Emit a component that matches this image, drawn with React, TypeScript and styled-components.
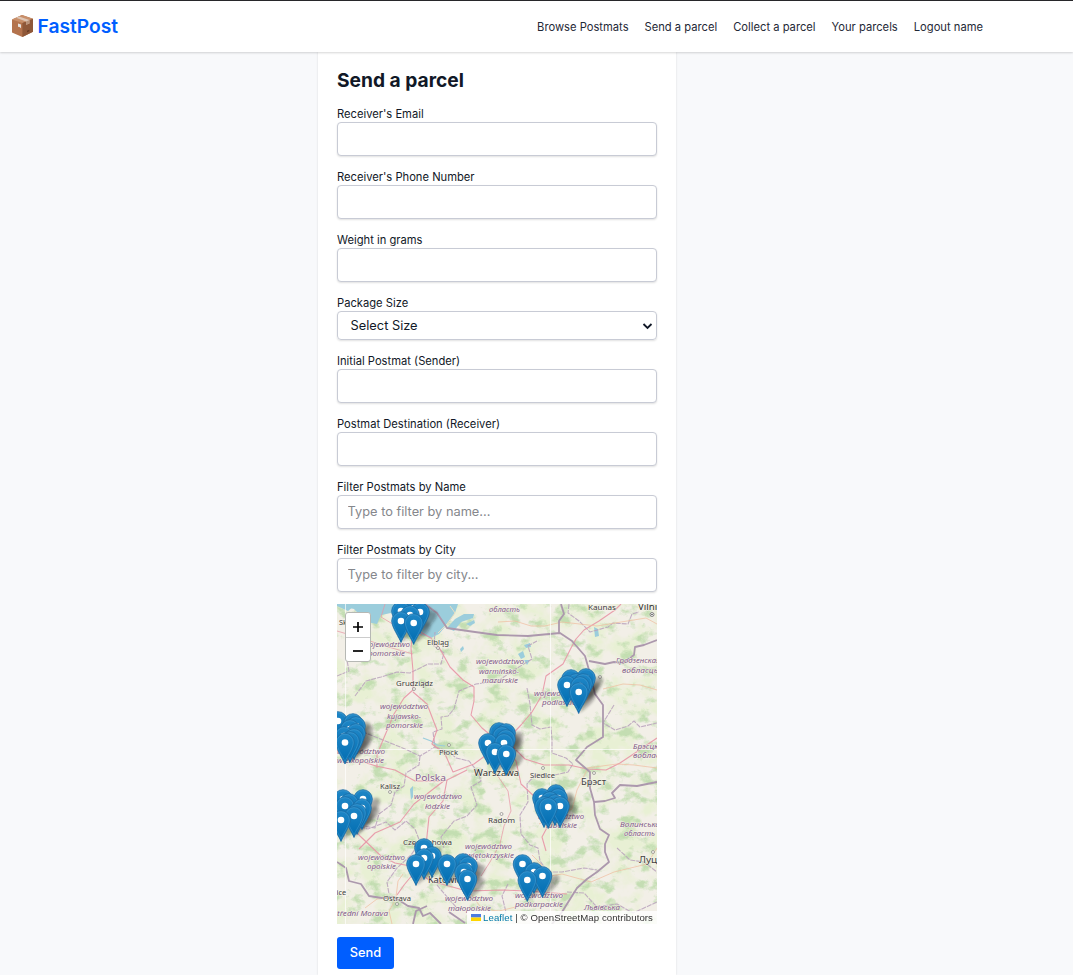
import React from "react";
import styled, { createGlobalStyle } from "styled-components";

const GlobalStyle = createGlobalStyle`
  * { box-sizing: border-box; }
  html, body { margin: 0; height: 100%; overflow: hidden; }
  body {
    background: #f8f9fb;
    color: #111827;
    font-family: Inter, "Liberation Sans", sans-serif;
  }
`;

const Page = styled.div`
  height: 100vh;
  display: flex;
  flex-direction: column;
  overflow: hidden;
`;

const Header = styled.header`
  position: relative;
  flex: 0 0 52px;
  display: flex;
  align-items: center;
  justify-content: space-between;
  padding: 0 90px 0 12px;
  background: #fff;
  border-top: 1px solid #27272a;
  box-shadow: 0 1px 2px rgba(0, 0, 0, 0.16);
`;

const Brand = styled.a`
  display: flex;
  align-items: center;
  gap: 4.5px;
  padding-bottom: 2px;
  color: #005eff;
  font-size: 19.2px;
  font-weight: 600;
  line-height: 28px;
`;

const Nav = styled.nav`
  display: flex;
  gap: 16px;
  padding-top: 1px;
`;

const NavLink = styled.a`
  color: #1f2937;
  font-size: 11.2px;
  line-height: 16px;
  white-space: nowrap;
`;

const Panel = styled.main`
  width: 358px;
  height: 923px;
  flex: none;
  margin-left: 318px;
  padding: 14px 19px 0;
  background: #fff;
  box-shadow: 0 0 2px rgba(0, 0, 0, 0.13);
`;

const Title = styled.h1`
  margin: 0 0 13px;
  font-size: 19.2px;
  font-weight: 700;
  line-height: 28px;
`;

const Field = styled.div<{ $last?: boolean }>`
  display: flex;
  flex-direction: column;
  margin-bottom: ${(p) => (p.$last ? 12 : 14)}px;
`;

const Label = styled.label`
  font-size: 11.2px;
  line-height: 15px;
`;

const Input = styled.input`
  height: 34px;
  padding: 0 10px 2px 9.6px;
  border: 1px solid #c8cbd5;
  border-radius: 4px;
  background: #fff;
  box-shadow: 0 1px 2px rgba(0, 0, 0, 0.12);
  font: 400 12.8px Inter, sans-serif;
  outline: none;
  &::placeholder { color: #85878c; opacity: 1; }
`;

const SelectBox = styled.div`
  display: flex;
  align-items: center;
  justify-content: space-between;
  height: 29px;
  padding: 0 3px 0 12.6px;
  border: 1px solid #c8cbd5;
  border-radius: 4px;
  box-shadow: 0 1px 2px rgba(0, 0, 0, 0.12);
  font-size: 12.8px;
`;

const MapFrame = styled.div`
  position: relative;
  width: 320px;
  height: 320px;
  margin-bottom: 13px;
  overflow: hidden;
  & > svg { display: block; }
`;

const ZoomControl = styled.div`
  position: absolute;
  left: 8px;
  top: 8px;
  width: 26px;
  border: 1px solid #b6b8b4;
  border-radius: 3px;
  background: #fff;
`;

const ZoomButton = styled.button`
  display: flex;
  align-items: center;
  justify-content: center;
  width: 24px;
  height: 24px;
  padding: 4px 0 0;
  border: 0;
  background: transparent;
  & + & { border-top: 1px solid #ccc; padding-top: 3px; }
`;

const Attribution = styled.div`
  position: absolute;
  right: 0;
  bottom: 0;
  display: flex;
  align-items: center;
  gap: 2.5px;
  height: 13px;
  padding: 0 4px;
  background: rgba(255, 255, 255, 0.82);
  color: #333;
  font: 9.6px/13px "Liberation Sans", sans-serif;
  letter-spacing: 0.08px;
  white-space: pre;
  & a { color: #0078a8; }
`;

const SendButton = styled.button`
  width: 57px;
  height: 32px;
  padding: 0 0 2px;
  border: 0;
  border-radius: 3px;
  background: #005eff;
  color: #fff;
  font: 500 12.8px Inter, sans-serif;
`;

const Parcel = () => (
  <svg width="21" height="22" viewBox="0 0 21 22">
    <path d="M0 4.6 10 0l11 3.7v13L10.4 22 0 17.4Z" fill="#b4734d" />
    <path d="M0 4.6 10 0l11 3.7L10.4 8Z" fill="#c88f6a" />
    <path d="M10.4 8 21 3.7v13L10.4 22Z" fill="#8f5839" />
    <path d="M4 2.7 7 1.4 17.4 5.1v3.3l-3.3 1.3V6.5Z" fill="#ddc5b5" />
    <path d="m14.1 6.5 3.3-1.4v3.3l-3.3 1.4Z" fill="#b99279" />
    <path d="m6 8.4 3 1.1v3.7L7.5 12 6 11.8Z" fill="#e6e3df" />
    <path d="m15 15.8 2.3-1v1.5l-2.3 1Z" fill="#643923" />
  </svg>
);

const borders = [
  "M88 0 100 9 110 24 138 28 160 31 191 32 223 29 235 37 248 52 252 66 258 90 266 101 266 133 250 143 239 156 253 168 253 184 257 198 258 211 263 225 272 231 268 240 268 248 272 258 260 268 250 275 240 284 225 308 215 320",
  "M222 29 222 17 227 10 224 0",
  "M252 57 268 60 277 58 286 59 297 51 298 43 307 41 320 36",
  "M257 198 268 197 278 194 275 189 283 181 300 182 320 178",
  "M0 258 9 264 12 277 24 280 32 292 45 294 57 293 71 302 82 304 86 312 93 309 104 320",
  "M112 308 128 319M76 320 79 307 90 302",
];

const regions = [
  "M0 72 12 67 9 51 19 46 17 34M18 92 29 77 44 73 60 68 73 69 91 60 104 60 107 49 97 42 98 28",
  "M2 133 18 139 26 128 46 136 68 145 83 152 98 143 96 128 105 125 104 113 111 112 117 105 122 87 139 80 161 77 177 66 195 55 191 42 200 37",
  "M83 152 82 161 69 169 67 182 58 188 54 201 42 210 38 224 26 222",
  "M98 143 111 147 119 154 132 157 141 168 144 177 134 183 140 201 130 212 117 217 104 233 107 244",
  "M0 226 16 221 31 225 49 218 58 226 69 217 78 225 83 238 74 251 60 264 50 278 52 290",
  "M101 258 104 269 100 281 111 294 119 303M171 280 165 292 169 308 160 320",
  "M190 84 193 100 195 121 203 125 214 123 215 136 215 149 229 154 236 160 231 168 213 172 199 170 190 180 191 198 183 211 184 230 193 241 201 244 203 257 211 268 225 268 247 264 260 266",
  "M232 0 231 9 242 17 253 28 271 23 276 19 291 20 295 10 302 8M277 101 266 119 278 126 291 122 297 117 303 123 320 119M280 244 293 256 307 258 320 268M230 288 247 289 260 303 280 300 296 309 320 298",
];

const roads = [
  "M76 24 74 44 76 67 76 86 67 94 57 110 46 136 40 151 40 164",
  "M76 88 90 100 100 126 95 140 108 150 116 168 137 160 152 149 165 140",
  "M14 154 39 162 58 166 78 177 101 177 110 176 130 166",
  "M110 176 106 197 92 213 90 232 88 251 77 269 67 281 60 291",
  "M108 176 95 186 77 200 63 218 38 229 22 245",
  "M76 24 94 34 103 45 113 63 126 76 137 83 137 97 134 111 145 124 163 139",
  "M2 203 9 216 23 232 44 252 58 259 73 262 92 276 108 281 130 287 166 286 190 287 230 290",
  "M166 140 184 121 195 108 205 91 209 72 226 60 234 44 239 35 247 26 262 17 278 6 284 0",
  "M171 138 188 155 207 161 232 161 250 165 269 166 283 159 301 147 320 134",
  "M166 144 179 157 184 180 199 194 211 205 213 218 205 233 209 247",
  "M161 18 178 17 194 22 208 22 225 18 260 22 284 18 309 14 320 20",
  "M250 166 240 186 235 205 217 212 202 220",
  "M250 164 280 160 297 161 320 164M266 85 286 80 303 81 320 86",
  "M195 251 204 260 208 273 225 270 254 278 277 268 310 260 320 244",
  "M28 304 40 295 59 293 61 277 66 270M55 320 52 307 60 293",
  "M134 290 145 305 162 307 187 301",
  "M48 0 44 13 59 22 73 29 85 31M0 27 27 35 48 42 76 50",
  "M159 142 156 154 158 168 171 187 174 207 167 222 163 240 153 258 144 272",
];

const waters =
  "M110 24 118 15 127 10 137 10 136 14 124 18 117 27M187 41l6-2 1 4-5 1ZM181 50l5-3 2 6-4 2ZM187 56l6 0-3 5ZM257 23l4 2 1 7-4 1ZM73 185l3-3 0 11-2 3ZM129 20l8-4 1 3-5 3ZM123 45l3-3 1 3-3 3Z";

type LabelData = [string, number, number, number, ("region" | "city" | "big" | "country" | "town")?];

const mapLabels: LabelData[] = [
  ["województwo", 26, 43, 47, "region"],
  ["pomorskie", 31, 52, 37, "region"],
  ["область", 152, 8, 31, "region"],
  ["województwo", 139, 60, 48, "region"],
  ["warmińsko-", 142, 70, 40, "region"],
  ["mazurskie", 145, 79, 36, "region"],
  ["województwo", 43, 105, 48, "region"],
  ["kujawsko-", 50, 115, 34, "region"],
  ["pomorskie", 49, 124, 37, "region"],
  ["województwo", 0, 150, 48, "region"],
  ["wielkopolskie", 0, 159, 47, "region"],
  ["województwo", 77, 195, 48, "region"],
  ["łódzkie", 88, 205, 25, "region"],
  ["województwo", 197, 92, 48, "region"],
  ["podlaskie", 205, 101, 34, "region"],
  ["Гродзенская", 279, 59, 44, "region"],
  ["вобласць", 285, 69, 36, "region"],
  ["Брэсцкая", 296, 145, 34, "region"],
  ["вобласць", 296, 154, 36, "region"],
  ["województwo", 201, 215, 46, "region"],
  ["lubelskie", 209, 224, 31, "region"],
  ["Волинська", 283, 223, 40, "region"],
  ["область", 287, 232, 31, "region"],
  ["województwo", 21, 256, 47, "region"],
  ["opolskie", 30, 265, 29, "region"],
  ["województwo", 128, 245, 47, "region"],
  ["świętokrzyskie", 126, 254, 51, "region"],
  ["województwo", 108, 297, 48, "region"],
  ["małopolskie", 111, 307, 43, "region"],
  ["województwo", 178, 294, 48, "region"],
  ["podkarpackie", 178, 303, 48, "region"],
  ["Львівська", 247, 306, 36, "region"],
  ["Střední Morava", -4, 312, 55, "region"],
  ["Elbląg", 90, 41, 22, "town"],
  ["Grudziądz", 59, 82, 37, "town"],
  ["Sk", 2, 21, 8, "town"],
  ["Kaunas", 251, 6, 28, "town"],
  ["Vilnius", 301, 6, 30, "city"],
  ["Płock", 102, 151, 19, "town"],
  ["Warszawa", 137, 172, 45, "city"],
  ["Kalisz", 43, 185, 20, "town"],
  ["Polska", 78, 177, 31, "country"],
  ["Siedlce", 193, 174, 25, "town"],
  ["Брэст", 244, 181, 25, "big"],
  ["Radom", 151, 219, 27, "town"],
  ["Częstochowa", 66, 241, 49, "town"],
  ["Katowice", 91, 279, 38, "city"],
  ["Ostrava", 46, 297, 28, "town"],
  ["Луцьк", 302, 259, 29, "big"],
  ["nice", -5, 291, 14, "town"],
];

const styleOf = {
  region: { size: 7.7, fill: "#805a88", italic: true },
  town: { size: 7.7, fill: "#3c3c3c", italic: false },
  city: { size: 9.2, fill: "#303030", italic: false },
  big: { size: 9.6, fill: "#404040", italic: false },
  country: { size: 9.8, fill: "#875f91", italic: false },
};

/* Each marker is given by the centre of its white dot, back to front. */
const pins: [number, number][] = [
  [70, 4], [77, 4], [64, 7], [83, 8], [73, 11], [64, 17], [76.7, 19],
  [234, 75], [249, 74], [239, 79], [246, 79], [230, 81], [243, 82], [241.7, 88],
  [1, 117], [16, 119], [19, 122], [13, 125], [19, 129], [7, 132], [17, 134], [13, 137], [8, 138.5],
  [6, 195], [26, 195], [12, 199], [8, 202], [25, 204], [20, 209], [17, 212], [4, 216],
  [162, 128], [169, 129], [165, 132], [169, 135], [151, 139], [167, 139], [158, 148], [169.3, 150],
  [219, 190], [205, 194], [221, 194], [213, 197], [218, 200], [207, 202], [223, 202], [211.2, 203],
  [87, 244], [95, 252], [87, 254], [79, 260], [126, 259], [110, 260], [131, 262], [127, 268], [130.5, 275],
  [185.5, 260], [197, 268], [205.5, 272], [190.3, 276],
];

const cityDots: [number, number][] = [[101, 44], [77, 85], [263, 73], [112, 141], [53, 188], [206, 164], [257, 169], [164.5, 210], [60, 300], [316, 248]];

const PostmatMap = () => (
  <svg width="320" height="320" viewBox="0 0 320 320">
    <defs>
      <filter id="forest" x="0" y="0" width="100%" height="100%" colorInterpolationFilters="sRGB">
        <feTurbulence type="fractalNoise" baseFrequency="0.06 0.08" numOctaves="6" seed="12" />
        <feColorMatrix values="0 0 0 0 .74  0 0 0 0 .86  0 0 0 0 .67  5 0 0 0 -2.65" />
      </filter>
      <filter id="meadow" x="0" y="0" width="100%" height="100%" colorInterpolationFilters="sRGB">
        <feTurbulence type="fractalNoise" baseFrequency="0.04" numOctaves="5" seed="31" />
        <feColorMatrix values="0 0 0 0 .91  0 0 0 0 .94  0 0 0 0 .83  4 0 0 0 -1.7" />
      </filter>
      <filter id="blur"><feGaussianBlur stdDeviation="1.5" /></filter>
      <linearGradient id="pinFill" x1="0" y1="0" x2="0" y2="1">
        <stop offset="0" stopColor="#1f86c6" />
        <stop offset="1" stopColor="#006cb0" />
      </linearGradient>
      <g id="pin">
        <path d="M0 21.5C-1.2 17.5-9.3 6.3-9.3 0a9.3 9.3 0 0 1 18.6 0C9.3 6.3 1.2 17.5 0 21.5Z" fill="url(#pinFill)" stroke="#1c6ca5" strokeWidth=".8" />
        <path d="M0 18.8C-1.3 15.2-8.3 6-8.3 0a8.3 8.3 0 0 1 16.6 0C8.3 6 1.3 15.2 0 18.8Z" fill="none" stroke="#4ba0d4" strokeWidth=".45" />
        <circle r="3.3" fill="#fff" />
      </g>
    </defs>
    <rect width="320" height="320" fill="#f2efe7" />
    <rect width="320" height="320" filter="url(#meadow)" />
    <rect width="320" height="320" filter="url(#forest)" opacity=".85" />
    <path d="M0 0H121L118 9 112 18 102 30 94 34 85 31 76 27 61 15 54 9 44 11 31 3 17 2 11 7 0 2Z" fill="#9bcddc" />
    <path d="M8 0H54L50 8 44 11 40 20 30 18 17 5 8 3Z" fill="#9bcddc" />
    <path d="M113 2 118 9 110 20 101 29" fill="none" stroke="#eadfc3" strokeWidth="1" />
    <path d={waters} fill="#9bcddc" />
    <path d="M86 134 94 137 100 141 108 142" fill="none" stroke="#9bcddc" strokeWidth="1.2" />
    <g fill="none" strokeLinejoin="round">
      {regions.map((d) => <path key={d} d={d} stroke="#b8a1bc" strokeWidth="1.1" strokeDasharray="5 1" opacity=".85" />)}
      {roads.map((d, i) => <path key={d} d={d} stroke={i > 9 && i < 16 ? "#efbda0" : "#e895a5"} strokeWidth={i > 9 ? 0.8 : 1.1} opacity=".9" />)}
      {borders.map((d) => <path key={d} d={d} stroke="#ac98ad" strokeWidth="1.8" />)}
    </g>
    <path d="M8.5 0V320M213.5 0V320M0 145.5H320" stroke="#fff" strokeWidth=".8" opacity=".85" />
    {cityDots.map(([x, y]) => <circle key={`${x}-${y}`} cx={x} cy={y} r="1.5" fill="#f6f4ee" stroke="#777" strokeWidth=".6" />)}
    <circle cx="315" cy="10.5" r="2" fill="#fff" stroke="#555" strokeWidth=".7" />
    <circle cx="315" cy="10.5" r=".8" fill="#444" />
    <g fontFamily='"Noto Sans", sans-serif' stroke="#f8f5eb" strokeWidth=".9" paintOrder="stroke" strokeLinejoin="round">
      {mapLabels.map(([text, x, y, width, kind = "town"]) => {
        const s = styleOf[kind];
        return (
          <text key={`${text}-${x}-${y}`} x={x} y={y} textLength={width} lengthAdjust="spacingAndGlyphs" fontSize={s.size} fill={s.fill} fontStyle={s.italic ? "italic" : "normal"}>
            {text}
          </text>
        );
      })}
    </g>
    <g filter="url(#blur)" fill="#111" opacity=".75">
      {pins.map(([x, y]) => <path key={`${x}-${y}`} d={`M${x} ${y + 21}L${x + 6} ${y + 4}Q${x + 13} ${y - 4} ${x + 17} ${y + 1}Q${x + 18} ${y + 9} ${x} ${y + 21}Z`} opacity=".45" />)}
    </g>
    {pins.map(([x, y]) => <use key={`${x}-${y}`} href="#pin" x={x} y={y} />)}
  </svg>
);

const links = ["Browse Postmats", "Send a parcel", "Collect a parcel", "Your parcels", "Logout name"];

const TextField = ({ label, placeholder, last }: { label: string; placeholder?: string; last?: boolean }) => (
  <Field $last={last}>
    <Label>{label}</Label>
    <Input placeholder={placeholder} aria-label={label} />
  </Field>
);

export default function App() {
  return (
    <Page>
      <GlobalStyle />
      <Header>
        <Brand><Parcel />FastPost</Brand>
        <Nav>{links.map((l) => <NavLink key={l}>{l}</NavLink>)}</Nav>
      </Header>
      <Panel>
        <Title>Send a parcel</Title>
        <TextField label="Receiver's Email" />
        <TextField label="Receiver's Phone Number" />
        <TextField label="Weight in grams" />
        <Field>
          <Label>Package Size</Label>
          <SelectBox>
            Select Size
            <svg width="11" height="8" viewBox="0 0 11 8"><path d="m1.5 2 4 4 4-4" fill="none" stroke="#111827" strokeWidth="1.8" /></svg>
          </SelectBox>
        </Field>
        <TextField label="Initial Postmat (Sender)" />
        <TextField label="Postmat Destination (Receiver)" />
        <TextField label="Filter Postmats by Name" placeholder="Type to filter by name..." />
        <TextField label="Filter Postmats by City" placeholder="Type to filter by city..." last />
        <MapFrame>
          <PostmatMap />
          <ZoomControl>
            <ZoomButton aria-label="Zoom in"><svg width="10" height="10"><path d="M5 0v10M0 5h10" stroke="#000" strokeWidth="1.7" /></svg></ZoomButton>
            <ZoomButton aria-label="Zoom out"><svg width="10" height="10"><path d="M0 5h10" stroke="#000" strokeWidth="1.7" /></svg></ZoomButton>
          </ZoomControl>
          <Attribution>
            <svg width="10" height="7"><path d="M0 0h10v3.5H0z" fill="#4c7be1" /><path d="M0 3.5h10V7H0z" fill="#ffd500" /></svg>
            <span><a>Leaflet</a> | © OpenStreetMap contributors</span>
          </Attribution>
        </MapFrame>
        <SendButton>Send</SendButton>
      </Panel>
    </Page>
  );
}
